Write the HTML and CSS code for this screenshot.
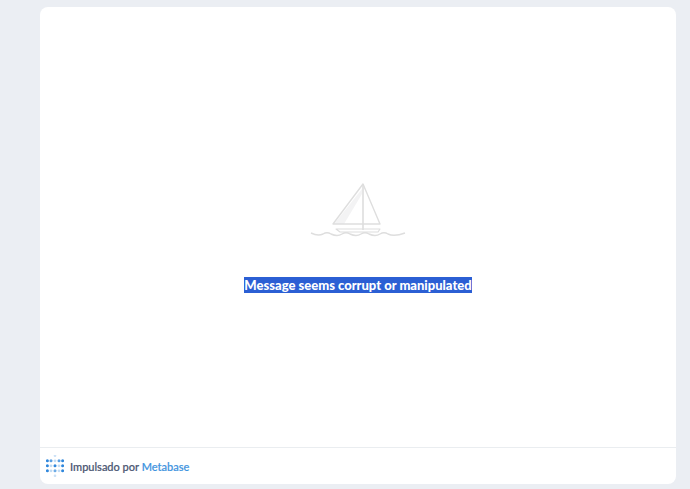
FILE: index.html
```html
<!DOCTYPE html>
<html lang="en">
<head>
<meta charset="utf-8">
<title>Message seems corrupt or manipulated</title>
<link rel="stylesheet" href="styles.css">
</head>
<body>
<main class="card">
  <section class="content">
    <svg class="boat" width="96" height="56" viewBox="0 0 96 56" fill="none" aria-hidden="true">
      <path d="M52 6 V11 L34 41 H24 Z" fill="#f3f3f4"/>
      <path d="M53 1 L23 41 H70 Z" stroke="#dedede" stroke-width="1.4" stroke-linejoin="round"/>
      <path d="M53 1 V47" stroke="#dedede" stroke-width="1.6"/>
      <path d="M26 46 H70 L68 49 H30 Z" stroke="#dedede" stroke-width="1.2" stroke-linejoin="round"/>
      <path d="M1 50 C5 52 9 53 13 51 C16 49 18 49 21 51 C25 53 29 53 32 51 C35 49 37 49 40 51 C44 53 48 53 51 51 C54 49 56 49 59 51 C63 53 67 53 70 51 C73 49 75 49 78 51 C82 53 87 53 95 50" stroke="#dedede" stroke-width="1.4"/>
    </svg>
    <p class="message"><span class="selected">Message seems corrupt or manipulated</span></p>
  </section>
  <footer class="footer">
    <svg class="logo" width="18" height="22" viewBox="0 0 18 22" aria-hidden="true">
      <g fill="#2f87dc">
        <circle cx="9" cy="0.8" r="1.3" opacity=".25"/>
        <circle cx="1.4" cy="5.8" r="1.5"/><circle cx="5" cy="5.8" r="1.5" opacity=".8"/><circle cx="9" cy="5.8" r="1.4" opacity=".3"/><circle cx="13" cy="5.8" r="1.5" opacity=".8"/><circle cx="16.6" cy="5.8" r="1.5"/>
        <circle cx="1.4" cy="10.8" r="1.5"/><circle cx="5" cy="10.8" r="1.4" opacity=".3"/><circle cx="9" cy="10.8" r="1.5"/><circle cx="13" cy="10.8" r="1.4" opacity=".3"/><circle cx="16.6" cy="10.8" r="1.5"/>
        <circle cx="1.4" cy="15.8" r="1.5"/><circle cx="5" cy="15.8" r="1.4" opacity=".3"/><circle cx="9" cy="15.8" r="1.5" opacity=".7"/><circle cx="13" cy="15.8" r="1.4" opacity=".3"/><circle cx="16.6" cy="15.8" r="1.5"/>
        <circle cx="9" cy="20.8" r="1.3" opacity=".25"/>
      </g>
    </svg>
    <span class="powered">Impulsado por <a class="brand" href="#">Metabase</a></span>
  </footer>
</main>
</body>
</html>
```
FILE: styles.css
```css
* { box-sizing: border-box; }
html, body { height: 100%; }
body {
  margin: 0;
  padding: 7px 14px 5px 40px;
  background: #ebeef3;
  font-family: Lato, "Liberation Sans", sans-serif;
  overflow: hidden;
}
.card {
  display: flex;
  flex-direction: column;
  height: 100%;
  background: #fff;
  border-radius: 8px;
  overflow: hidden;
}
.content {
  flex: 1;
  display: flex;
  flex-direction: column;
  align-items: center;
  justify-content: center;
  padding-top: 21px;
}
.boat { display: block; margin-left: -1px; }
.message {
  margin: 38px 0 0;
  font-size: 13px;
  font-weight: 900;
  line-height: 16px;
  color: #fff;
}
.selected { background: #2b5fd4; display: inline-block; }
.footer {
  display: flex;
  align-items: center;
  gap: 6px;
  height: 37px;
  padding-left: 6px;
  border-top: 1px solid #eaedf0;
}
.logo { display: block; }
.powered { font-size: 11px; font-weight: 500; color: #4c5773; -webkit-text-stroke: 0.2px currentColor; }
.brand { color: #3f94e0; text-decoration: none; }
```
